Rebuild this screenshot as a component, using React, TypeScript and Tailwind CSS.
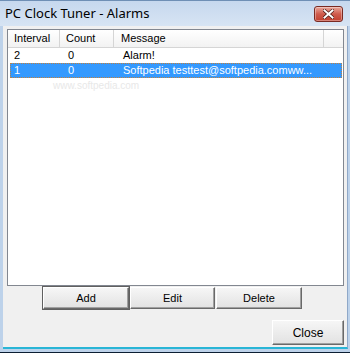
import React from "react";

const btn =
  "flex items-center justify-center bg-gradient-to-b from-[#f6f6f6] to-[#e2e2e2] border border-t-white border-l-white border-r-[#696969] border-b-[#696969] shadow-[inset_-1px_-1px_0_#a0a0a0] text-[11px] text-black";

export default function App() {
  return (
    <div
      className="w-[350px] h-[353px] flex flex-col bg-[#bdd2ea] overflow-hidden"
      style={{ fontFamily: '"Liberation Sans", Arial, sans-serif' }}
    >
      {/* Title bar */}
      <div className="h-[26px] shrink-0 flex items-center justify-between pl-[5px] pr-[7px] bg-gradient-to-b from-[#c6d8ee] to-[#d7e4f3] border-t border-[#6f8fb5]">
        <span
          className="text-[13px] text-black"
          style={{ fontFamily: '"Noto Sans", "Open Sans", sans-serif' }}
        >
          PC Clock Tuner - Alarms
        </span>
        <div className="w-[29px] h-[16px] mt-[1px] rounded-[3px] border border-[#7a2a22] bg-gradient-to-b from-[#e8a79c] via-[#cf5b4c] to-[#c2402f] flex items-center justify-center shadow-[inset_0_0_0_1px_rgba(255,255,255,0.35)]">
          <svg width="11" height="10" viewBox="0 0 11 10">
            <path d="M1.5 1.5 L9.5 8.5 M9.5 1.5 L1.5 8.5" stroke="#4a1a14" strokeWidth="3.4" strokeLinecap="square" />
            <path d="M1.5 1.5 L9.5 8.5 M9.5 1.5 L1.5 8.5" stroke="#ffffff" strokeWidth="2" strokeLinecap="square" />
          </svg>
        </div>
      </div>

      {/* Body with frame */}
      <div className="flex-1 flex pl-[3px] pr-[2px] pb-[3px] bg-[#bdd2ea] border-b border-[#0c1e33]">
        <div className="flex-1 flex flex-col bg-[#f0f0f0] border-r border-[#8fa8c8] border-b-[2px] border-b-[#29b5d6] pl-[4px] pr-[3px] pt-[3px]">
          {/* List view */}
          <div className="relative h-[257px] bg-white border border-[#828790] flex flex-col">
            <div className="h-[18px] flex text-[11px] text-black bg-gradient-to-b from-white to-[#f2f2f2] border-b border-[#d5d5d5]">
              <div className="w-[52px] pl-[6px] flex items-center border-r border-[#d5d5d5]">Interval</div>
              <div className="w-[54px] pl-[6px] flex items-center border-r border-[#d5d5d5]">Count</div>
              <div className="w-[210px] pl-[7px] flex items-center border-r border-[#d5d5d5]">Message</div>
              <div className="flex-1" />
            </div>
            <div className="flex flex-col pl-[2px] pr-[1px] text-[11px]">
              <div className="h-[15px] flex items-center text-black">
                <div className="w-[52px] pl-[4px]">2</div>
                <div className="w-[54px] pl-[6px]">0</div>
                <div className="pl-[7px]">Alarm!</div>
              </div>
              <div className="h-[15px] flex items-center text-white bg-[#3399ff] outline outline-1 outline-dotted outline-[#c08040] -outline-offset-1">
                <div className="w-[52px] pl-[4px]">1</div>
                <div className="w-[54px] pl-[6px]">0</div>
                <div className="pl-[7px] whitespace-nowrap">Softpedia testtest@softpedia.comww...</div>
              </div>
            </div>
            <div className="absolute left-[45px] top-[48px] text-[10px] text-[#e8e8e8]">www.softpedia.com</div>
          </div>

          {/* Buttons row */}
          <div className="flex pl-[36px] mt-[1px]">
            <div className={`${btn} w-[86px] h-[22px] border-[#404040] outline outline-1 outline-[#606060]`}>Add</div>
            <div className={`${btn} w-[85px] h-[22px] ml-[1px]`}>Edit</div>
            <div className={`${btn} w-[86px] h-[22px] ml-[1px]`}>Delete</div>
          </div>

          <div className="flex justify-end mt-[11px] pr-[0px]">
            <div className={`${btn} w-[72px] h-[25px] text-[12px]`}>Close</div>
          </div>
        </div>
      </div>
    </div>
  );
}
